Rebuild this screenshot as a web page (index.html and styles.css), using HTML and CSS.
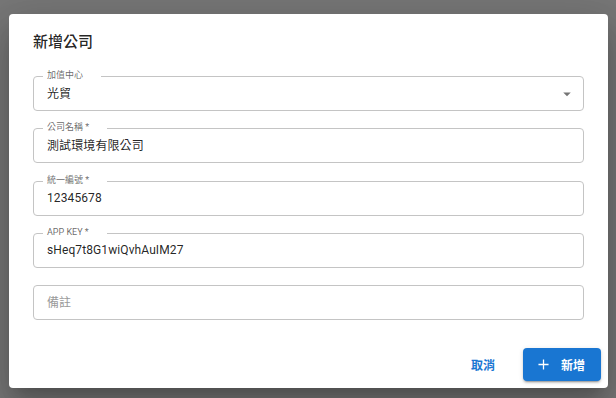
FILE: index.html
```html
<!DOCTYPE html>
<html lang="zh-Hant">

<head>
    <meta charset="utf-8">
    <title>新增公司</title>
    <link rel="stylesheet" href="styles.css">
</head>

<body>
    <div class="dialog">
        <h2 class="dialog-title">新增公司</h2>

        <div class="dialog-content">
            <div class="field select">
                <span class="field-label">加值中心</span>
                <span class="field-value">光貿</span>
                <svg class="arrow" viewBox="0 0 24 24" width="18" height="18">
                    <path d="M7 10l5 5 5-5z" fill="#757575"></path>
                </svg>
            </div>
            <div class="field">
                <span class="field-label">公司名稱 *</span>
                <span class="field-value">測試環境有限公司</span>
            </div>
            <div class="field">
                <span class="field-label">統一編號 *</span>
                <span class="field-value">12345678</span>
            </div>
            <div class="field">
                <span class="field-label">APP KEY *</span>
                <span class="field-value">sHeq7t8G1wiQvhAuIM27</span>
            </div>
            <div class="field">
                <span class="field-value placeholder">備註</span>
            </div>
        </div>

        <div class="dialog-actions">
            <button class="btn btn-text">取消</button>
            <button class="btn btn-primary">
                <svg viewBox="0 0 12 12" width="11" height="11">
                    <path d="M6 0.5v11M0.5 6h11" stroke="#fff" stroke-width="1.4" fill="none"></path>
                </svg>
                新增
            </button>
        </div>
    </div>
</body>

</html>
```

FILE: styles.css
```css
* {
    box-sizing: border-box;
}

html,
body {
    height: 100%;
}

body {
    margin: 0;
    padding: 14px 0 0 9px;
    background-color: #777;
    font-family: Roboto, "Noto Sans CJK TC", sans-serif;
    color: rgba(0, 0, 0, 0.87);
    overflow: hidden;
}

.dialog {
    display: flex;
    flex-direction: column;
    width: 599px;
    height: 374px;
    background-color: #fff;
    border-radius: 4px;
    box-shadow: 0 11px 15px -7px rgba(0, 0, 0, 0.2),
        0 24px 38px 3px rgba(0, 0, 0, 0.14),
        0 9px 46px 8px rgba(0, 0, 0, 0.12);
}

.dialog-title {
    margin: 0;
    padding: 16px 24px 0;
    font-size: 15px;
    font-weight: 500;
    line-height: 24px;
}

.dialog-content {
    display: flex;
    flex-direction: column;
    gap: 17.3px;
    padding: 22px 24px 0;
}

.field {
    position: relative;
    display: flex;
    align-items: center;
    height: 35px;
    padding: 0 13px;
    border: 1px solid #c4c4c4;
    border-radius: 4px;
}

.field-label {
    position: absolute;
    top: -8px;
    left: 9px;
    padding: 0 18px 0 4px;
    background-color: #fff;
    font-size: 9px;
    line-height: 12px;
    color: rgba(0, 0, 0, 0.6);
}

.field-value {
    font-size: 12px;
    line-height: 16px;
    letter-spacing: 0.1px;
}

.placeholder {
    color: #9a9a9a;
}

.select {
    justify-content: space-between;
    padding-right: 7px;
}

.dialog-actions {
    display: flex;
    justify-content: flex-end;
    align-items: center;
    gap: 20px;
    margin-top: auto;
    padding: 7px;
}

.btn {
    display: flex;
    align-items: center;
    border: none;
    font-family: Roboto, "Noto Sans CJK TC", sans-serif;
    font-size: 12px;
    font-weight: 700;
    cursor: pointer;
}

.btn-text {
    padding: 8px;
    background-color: transparent;
    color: #1976d2;
}

.btn-primary {
    gap: 12px;
    height: 33px;
    padding: 0 16px 0 15px;
    background-color: #1976d2;
    color: #fff;
    border-radius: 4px;
    box-shadow: 0 3px 1px -2px rgba(0, 0, 0, 0.2),
        0 2px 2px 0 rgba(0, 0, 0, 0.14),
        0 1px 5px 0 rgba(0, 0, 0, 0.12);
}
```
